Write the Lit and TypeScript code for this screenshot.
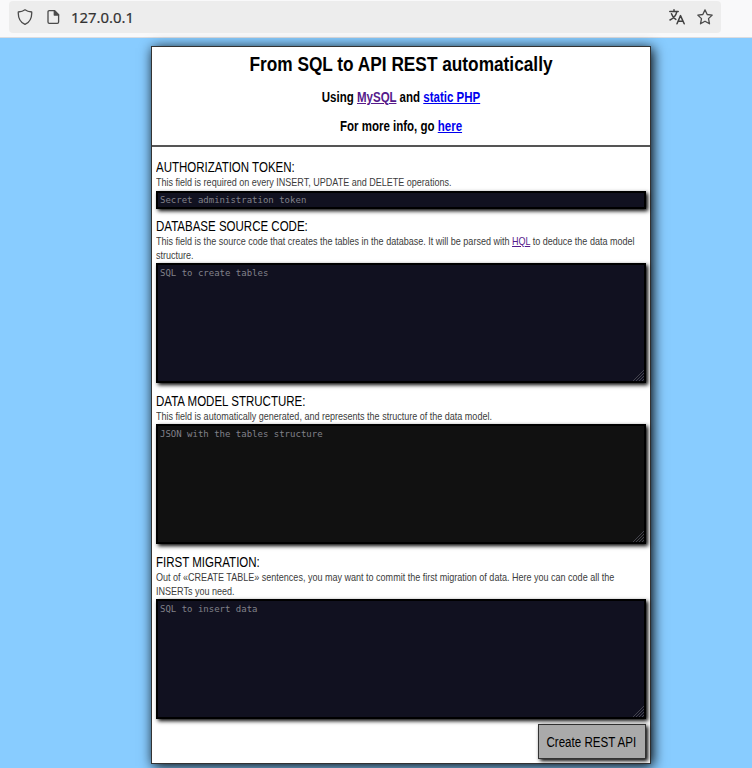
import { LitElement, html, css, svg } from "lit";
import { customElement, property } from "lit/decorators.js";

@customElement("browser-bar")
class BrowserBar extends LitElement {
  static styles = css`
    :host { display: flex; box-sizing: border-box; height: 38px; background: #f9f9fa; border-bottom: 1px solid #dcdcdf; padding: 1px 31px 4px 9px; }
    .field { flex: 1; display: flex; align-items: center; background: #ededed; border-radius: 4px; padding: 0 8px 0 8px; color: #333; }
    svg { display: block; width: 16px; height: 16px; fill: none; stroke: #4a4a4a; stroke-width: 1.3; stroke-linejoin: round; stroke-linecap: round; }
    .page { margin-left: 12px; }
    .url { flex: 1; margin-left: 10px; font: 14.9px/20px "Noto Sans", sans-serif; -webkit-text-stroke: 0.2px #333; }
    .star { margin-left: 12px; }
    .solid { fill: #4a4a4a; }
    .translate { stroke-width: 1.5; stroke: #404040; }
  `;
  render() {
    return html`<div class="field">
      <svg viewBox="0 0 16 16"><path d="M8 .8 C6.2 2.2 3.7 2.8 1.3 3 C1 8.5 2.8 13 8 15.4 C13.2 13 15 8.5 14.7 3 C12.3 2.8 9.8 2.2 8 .8Z"/></svg>
      <svg class="page" viewBox="0 0 16 16"><path d="M4.3 1.7H9.6L13.6 5.7V13Q13.6 14.3 12.3 14.3H4.3Q3 14.3 3 13V3Q3 1.7 4.3 1.7Z"/><path class="solid" d="M9.3 1.7V6H13.6Z"/></svg>
      <span class="url">127.0.0.1</span>
      <svg class="translate" viewBox="0 0 16 16"><path d="M.8 2.5H9.2M5 .8V2.5M7.8 2.8C7 6.2 4.5 9.3 1 11M2.5 4.8C3.3 7.4 4.8 9.3 6.8 10.4M8 14.8L11.5 6.6L15.2 14.8M9.2 12.3H14"/></svg>
      <svg class="star" viewBox="0 0 16 16"><path d="M8 .9L10.2 5.5L15.2 6.1L11.5 9.6L12.5 14.8L8 12.2L3.5 14.8L4.5 9.6L.8 6.1L5.8 5.5Z"/></svg>
    </div>`;
  }
}

@customElement("form-field")
class FormField extends LitElement {
  @property() label = "";
  @property() hint = "";
  @property() kind = "area";
  static styles = css`
    :host { display: block; }
    .label, .desc { width: 597px; transform: scaleX(0.822); transform-origin: 0 0; }
    .label { font-size: 14px; line-height: 16px; color: #000; }
    .desc { font-size: 11px; line-height: 14px; color: #3c3c3c; transform: scaleX(0.82); }
    .box { display: block; box-sizing: border-box; width: 100%; margin: 1px 0 0; border: 2px solid #000; border-radius: 0; background: #111120; box-shadow: 2px 2px 4px #000; padding: 3px 2px 2px; font: 9px/11px "DejaVu Sans Mono", monospace; outline: none; color: #ccc; }
    .line { height: 18px; margin-top: 2px; padding-top: 2px; }
    .area, .model { height: 120px; resize: none; }
    .model { background: #111; }
    .wrap { position: relative; }
    .grip { position: absolute; right: 2px; bottom: 2px; width: 11px; height: 11px; stroke: #4a4a52; stroke-width: .9; fill: none; }
    .box::placeholder { color: #81818a; opacity: 1; }
  `;
  render() {
    return html`<div class="label">${this.label}</div>
      <div class="desc"><slot></slot></div>
      <div class="wrap">${this.kind === "line"
        ? html`<input class="box line" placeholder=${this.hint}>`
        : html`<textarea class="box ${this.kind}" placeholder=${this.hint}></textarea>
          <svg class="grip" viewBox="0 0 11 11">${[0, 3, 6, 9].map((n) => svg`<path d="M${n} 11L11 ${n}"/>`)}</svg>`}</div>`;
  }
}

@customElement("app-root")
class AppRoot extends LitElement {
  static styles = css`
    :host { display: block; height: 768px; overflow: hidden; background: #88ccff; font-family: "Liberation Sans", Arial, sans-serif; }
    .card { box-sizing: border-box; width: 500px; height: 718px; margin: 8px 0 0 151px; background: #fff; border: 1px solid #333; box-shadow: 2px 2px 12px #000; }
    .head { box-sizing: border-box; height: 100px; text-align: center; font-weight: 700; border-bottom: 2px solid #555; padding-top: 5px; }
    .title, .sub { transform: scaleX(0.822); }
    .title { font-size: 21px; line-height: 23px; padding-bottom: 1px; }
    .sub { font-size: 14px; line-height: 16px; margin-top: 13px; }
    a { color: #0000ee; text-decoration: underline; }
    .seen { color: #551a8b; }
    .form { padding: 12px 4px 0; display: flex; flex-direction: column; }
    .gap9 { margin-top: 9px; }
    .gap10 { margin-top: 10px; }
    .go { align-self: flex-end; display: flex; justify-content: center; align-items: center; box-sizing: border-box; width: 108px; height: 35px; margin-top: 5px; border: 1px solid #333; border-radius: 0; background: #aaa; box-shadow: 2px 2px 4px #000; font: 14px/16px "Liberation Sans", Arial, sans-serif; padding: 0 1px 0 0; color: #000; }
    .go span { flex: none; white-space: nowrap; transform: scaleX(0.825); }
  `;
  render() {
    return html`<browser-bar></browser-bar>
      <div class="card">
        <div class="head">
          <div class="title">From SQL to API REST automatically</div>
          <div class="sub">Using <a class="seen">MySQL</a> and <a>static PHP</a></div>
          <div class="sub">For more info, go <a>here</a></div>
        </div>
        <div class="form">
          <form-field label="AUTHORIZATION TOKEN:" hint="Secret administration token" kind="line">This field is required on every INSERT, UPDATE and DELETE operations.</form-field>
          <form-field class="gap9" label="DATABASE SOURCE CODE:" hint="SQL to create tables">This field is the source code that creates the tables in the database. It will be parsed with <a class="seen">HQL</a> to deduce the data model structure.</form-field>
          <form-field class="gap10" label="DATA MODEL STRUCTURE:" hint="JSON with the tables structure" kind="model">This field is automatically generated, and represents the structure of the data model.</form-field>
          <form-field class="gap10" label="FIRST MIGRATION:" hint="SQL to insert data">Out of «CREATE TABLE» sentences, you may want to commit the first migration of data. Here you can code all the INSERTs you need.</form-field>
          <button class="go"><span>Create REST API</span></button>
        </div>
      </div>`;
  }
}
